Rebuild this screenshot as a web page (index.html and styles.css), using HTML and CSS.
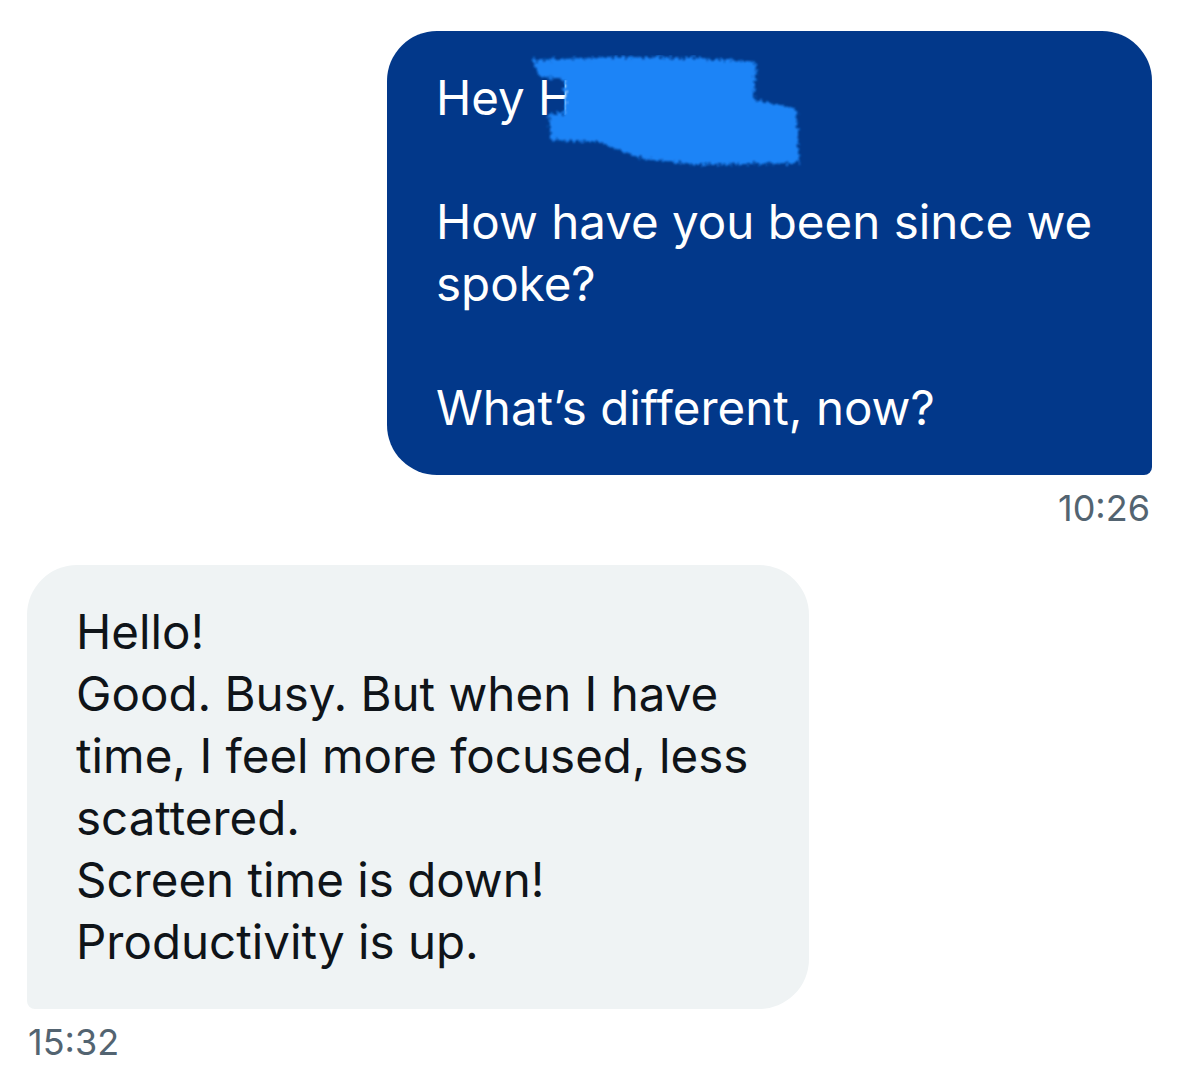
FILE: index.html
```html
<!DOCTYPE html>
<html lang="en">
<head>
<meta charset="utf-8">
<title>Messages</title>
<link rel="stylesheet" href="styles.css">
</head>
<body>
<main class="thread">
  <div class="msg msg-out">
    <div class="bubble bubble-out">
      <p class="line name-line">Hey Ha<span class="redact" aria-hidden="true"><svg width="280" height="115" viewBox="0 0 280 115"><defs><filter id="rough" x="-10%" y="-10%" width="120%" height="120%"><feTurbulence type="fractalNoise" baseFrequency="0.3" numOctaves="3" seed="5"/><feDisplacementMap in="SourceGraphic" scale="10"/><feGaussianBlur stdDeviation="0.9"/></filter></defs><g filter="url(#rough)" fill="#1b84f7"><path d="M4 5 L90 2 L170 3 L227 7 L225 45 L267 53 L270 108 L170 110 L110 103 L70 87 L22 85 L20 60 L36 57 L36 25 L10 21 Z"/></g></svg></span></p>
      <p class="line">&nbsp;</p>
      <p class="line">How have you been since we<br>spoke?</p>
      <p class="line">&nbsp;</p>
      <p class="line">What’s different, now?</p>
    </div>
    <div class="time time-out">10:26</div>
  </div>
  <div class="msg msg-in">
    <div class="bubble bubble-in">
      <p class="line">Hello!</p>
      <p class="line">Good. Busy. But when I have<br>time, I feel more focused, less<br>scattered.</p>
      <p class="line">Screen time is down!</p>
      <p class="line">Productivity is up.</p>
    </div>
    <div class="time time-in">15:32</div>
  </div>
</main>
</body>
</html>
```

FILE: styles.css
```css
* { box-sizing: border-box; }
html, body {
  margin: 0;
  padding: 0;
  background: #ffffff;
}
body {
  font-family: Inter, Roboto, "Noto Sans", sans-serif;
  width: 1179px;
  height: 1070px;
  overflow: hidden;
}
.thread {
  display: flex;
  flex-direction: column;
  padding: 31px 27px 0 27px;
  gap: 33px;
}
.msg {
  display: flex;
  flex-direction: column;
}
.msg-out { align-items: flex-end; }
.msg-in { align-items: flex-start; }
.bubble {
  padding: 36px 49px;
  font-size: 47.5px;
  line-height: 62px;
  letter-spacing: 0;
}
.bubble-out {
  width: 765px;
  background: #02388a;
  color: #ffffff;
  border-radius: 50px 50px 8px 50px;
}
.bubble-in {
  width: 782px;
  background: #eff3f4;
  color: #0f1419;
  border-radius: 50px 50px 50px 8px;
}
.line {
  margin: 0;
  white-space: nowrap;
}
.name-line { position: relative; }
.redact {
  position: absolute;
  left: 93px;
  top: -12px;
  width: 280px;
  height: 115px;
}
.redact svg { display: block; }
.time {
  margin-top: 9px;
  font-size: 36px;
  line-height: 48px;
  color: #536471;
}
.time-out { margin-right: 2px; }
.time-in { margin-left: 1px; }
```
